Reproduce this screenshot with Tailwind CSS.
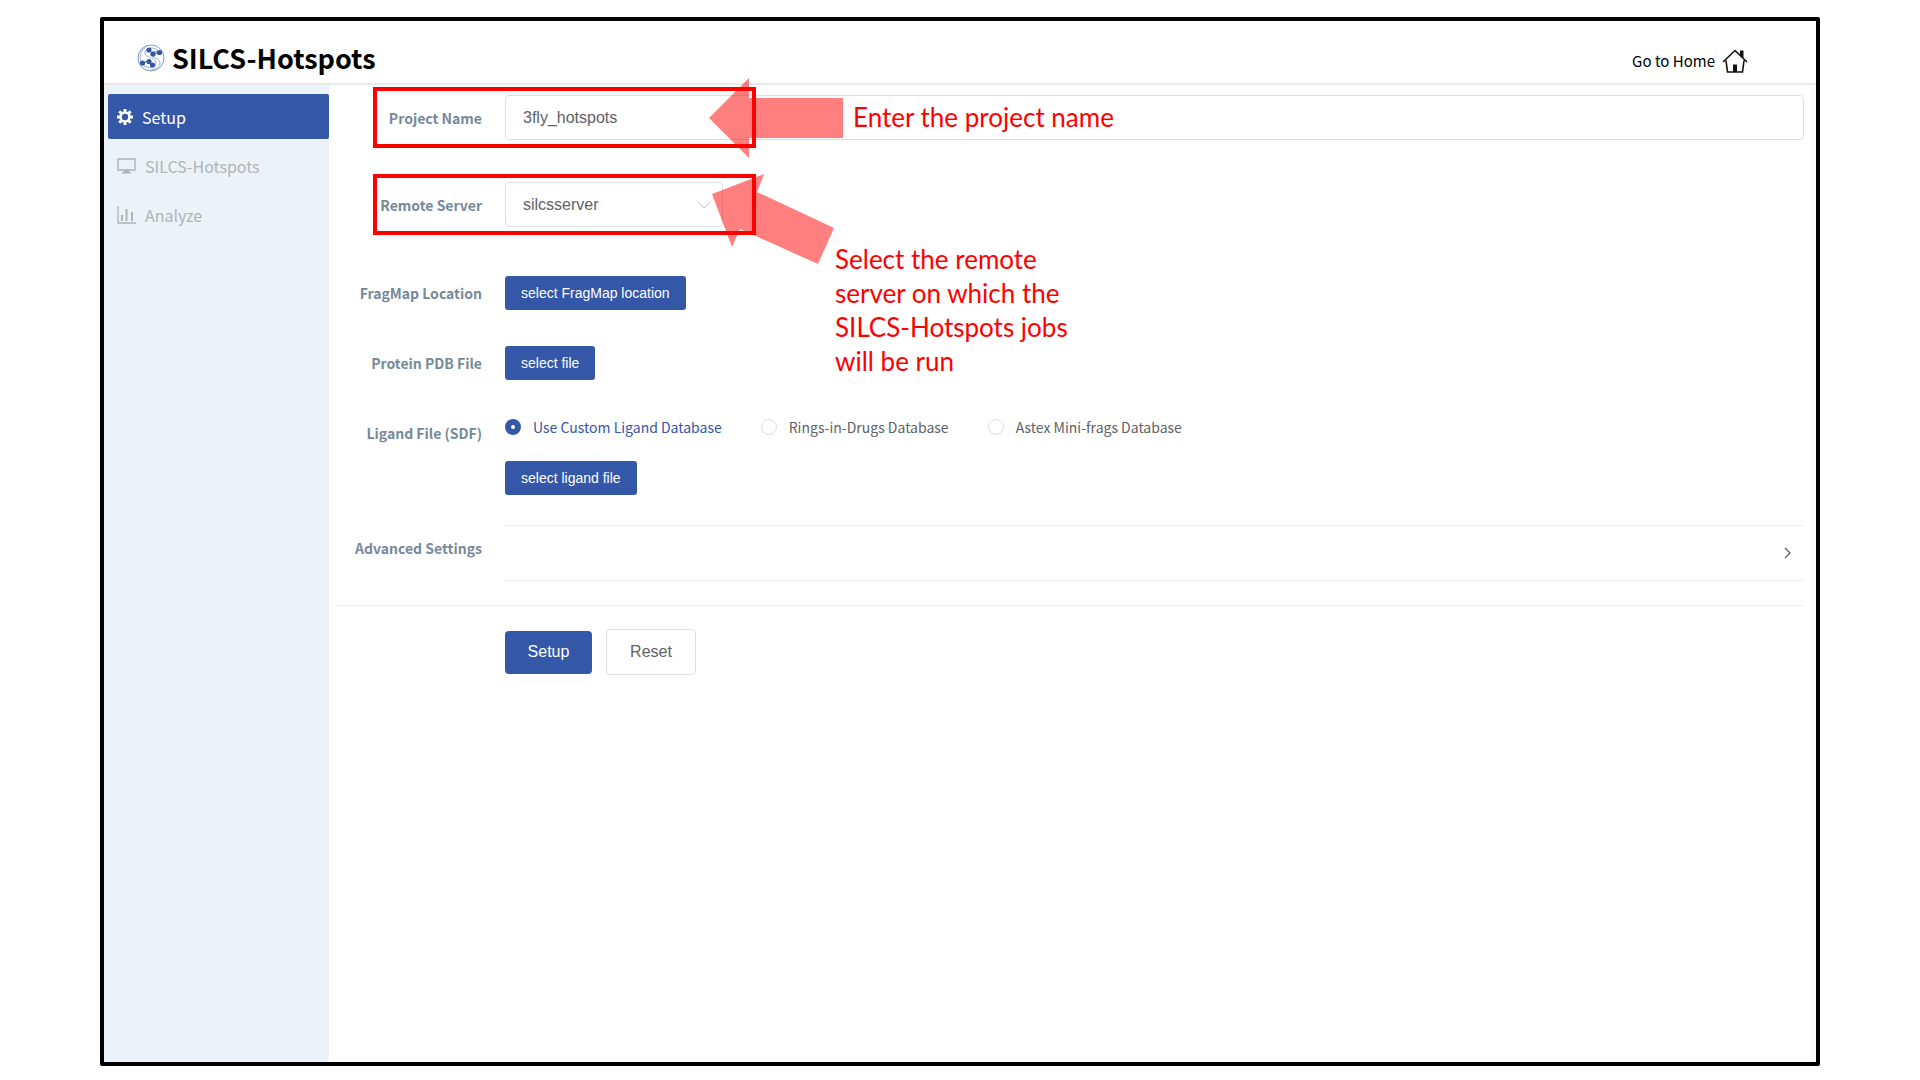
<!DOCTYPE html>
<html lang="en">
<head>
  <meta charset="UTF-8" />
  <meta name="viewport" content="width=device-width, initial-scale=1.0" />
  <title>SILCS-Hotspots</title>
  <script src="https://cdn.jsdelivr.net/npm/@tailwindcss/browser@4"></script>
</head>
<body class="min-h-screen flex flex-col bg-white px-[100px] pt-[17px] pb-[14px] font-['Noto_Sans_CJK_SC',sans-serif]">
  <div class="flex-1 flex flex-col border-4 border-black rounded-xs">

    <header class="flex justify-between items-center h-16 border-b-2 border-[#e9eaeb] pl-[33px] pr-[68px]">
      <h1 class="flex items-center gap-[7px] text-[27px] leading-8 font-bold text-black pt-3">
        <svg class="w-7 h-7" viewBox="0 0 28 28" fill="none">
          <circle cx="14" cy="14" r="13" stroke="#7f96cb" />
          <path d="M22 8C18 2 8 3 8 9c0 5 11 4 11 10 0 5-8 6-13 2" stroke="#9badd7" />
          <path d="M22 8C17 7 13 8 14 11c1 3 10 3 9 9-1 4-6 6-10 6M5 19c-4-6-1-13 5-17" stroke="#9badd7" />
          <path d="M12 6l4 4 7-2M5 19l7-2 4 4" stroke="#3456a5" />
          <g fill="#3456a5">
            <circle cx="12" cy="6" r="2.600" /><circle cx="16" cy="10" r="2.600" /><circle cx="22.500" cy="8.500" r="2.600" />
            <circle cx="5.500" cy="19" r="2.600" /><circle cx="12" cy="17.500" r="2.600" /><circle cx="15.500" cy="21" r="2.600" />
          </g>
        </svg>
        SILCS-Hotspots
      </h1>
      <a href="#" class="flex items-center gap-[7px] text-[15px] leading-6 text-black pt-[18px]">
        Go to Home
        <svg class="w-[26px] h-6" viewBox="0 0 26 24" fill="none" stroke="#111" stroke-width="1.600">
          <path d="M1 13L13 1.500 25 13M4 11.500L5.500 23h15L22 11.500" />
          <path d="M18 1.500h3.500v8L18 6zM11 15.500h4V23h-4z" fill="#111" stroke="none" />
        </svg>
      </a>
    </header>

    <div class="flex-1 flex">
      <nav class="w-[225px] shrink-0 flex flex-col gap-1 bg-[#ebf3f9] pl-1 pt-[9px] text-base">
        <a href="#" class="flex items-center gap-[9px] h-[45px] pl-[9px] rounded-xs bg-[#3457a7] text-white">
          <svg class="w-4 h-4" viewBox="0 0 16 16">
            <g fill="none" stroke="#fff">
              <circle cx="8" cy="8" r="4.500" stroke-width="2.600" />
              <path d="M8 0v3M8 13v3M0 8h3M13 8h3M2.300 2.300l2.200 2.200M11.500 11.500l2.200 2.200M2.300 13.700l2.200-2.200M11.500 4.500l2.200-2.200" stroke-width="3" />
            </g>
          </svg>
          Setup
        </a>
        <a href="#" class="flex items-center gap-[9px] h-[45px] pl-[9px] text-[#b0b3b5]">
          <svg class="w-[19px] h-4" viewBox="0 0 19 16" fill="none">
            <path d="M1 1h17v11H1z" stroke="#b0b3b5" stroke-width="1.400" />
            <path d="M7 12h5v2h2v1.500H5V14h2z" fill="#b0b3b5" />
          </svg>
          SILCS-Hotspots
        </a>
        <a href="#" class="flex items-center gap-[9px] h-[45px] pl-[9px] text-[#b0b3b5]">
          <svg class="w-[19px] h-[18px]" viewBox="0 0 19 18" fill="none" stroke="#b0b3b5">
            <path d="M1 0v17h18" stroke-width="1.300" />
            <path d="M5 9v6M9.500 3v12M15 6v9" stroke-width="2" />
          </svg>
          Analyze
        </a>
      </nav>

      <main class="flex-1 pl-[7px] pr-[6px] pt-[10px]">
        <form>

          <div class="relative flex items-center gap-[23px] h-[45px]">
            <label for="project" class="w-[146px] shrink-0 text-right text-sm font-bold text-[#76899b]">Project Name</label>
            <input id="project" type="text" value="3fly_hotspots" class="flex-1 h-[45px] rounded-sm border border-[#dcdfe6] px-[17px] font-['Liberation_Sans',sans-serif] text-base text-[#606266]" />
            <!-- callout: project name -->
            <svg class="absolute left-[373px] -top-[17px] w-[134px] h-20" viewBox="0 0 134 80">
              <path d="M0 40L40 0v20h94v40H40v20z" fill="#f00" fill-opacity=".5" />
            </svg>
            <div class="absolute left-[37px] -top-2 w-[383px] h-[61px] border-4 border-[#f00]"></div>
            <p class="absolute left-[517px] top-[5px] font-[Lato,sans-serif] text-[26px] leading-[34px] text-[#f00] whitespace-nowrap">Enter the project name</p>
          </div>

          <div class="relative flex items-center gap-[23px] h-[45px] mt-[42px]">
            <label for="server" class="w-[146px] shrink-0 text-right text-sm font-bold text-[#76899b]">Remote Server</label>
            <div class="relative w-[218px]">
              <select id="server" class="appearance-none w-full h-[45px] rounded-sm border border-[#dcdfe6] px-[17px] font-['Liberation_Sans',sans-serif] text-base text-[#606266]">
                <option>silcsserver</option>
              </select>
              <svg class="absolute right-[13px] top-[19px] w-3 h-2 pointer-events-none" viewBox="0 0 12 8" fill="none" stroke="#c0c4cc"><path d="M0 1l6 6 6-6" /></svg>
            </div>
            <!-- callout: remote server -->
            <svg class="absolute left-[376px] -top-2 w-[123px] h-[90px]" viewBox="0 0 123 90">
              <path d="M0 20L52 0l-7 18 77 36-16 36L28 55l-8 18z" fill="#f00" fill-opacity=".5" />
            </svg>
            <div class="absolute left-[37px] -top-2 w-[383px] h-[61px] border-4 border-[#f00]"></div>
            <p class="absolute left-[499px] top-[60px] font-[Lato,sans-serif] text-[26px] leading-[34px] text-[#f00] whitespace-nowrap">Select the remote<br>server on which the<br>SILCS-Hotspots jobs<br>will be run</p>
          </div>

          <div class="flex items-center gap-[23px] mt-[49px]">
            <label for="fragmap" class="w-[146px] shrink-0 text-right text-sm leading-6 font-bold text-[#76899b]">FragMap Location</label>
            <button id="fragmap" type="button" class="h-[34px] px-4 rounded-[3px] bg-[#3457a7] font-['Liberation_Sans',sans-serif] text-sm text-white">select FragMap location</button>
          </div>

          <div class="flex items-center gap-[23px] mt-9">
            <label for="protein" class="w-[146px] shrink-0 text-right text-sm leading-6 font-bold text-[#76899b]">Protein PDB File</label>
            <button id="protein" type="button" class="h-[34px] px-4 rounded-[3px] bg-[#3457a7] font-['Liberation_Sans',sans-serif] text-sm text-white">select file</button>
          </div>

          <div class="flex items-start gap-[23px] mt-9">
            <label for="ligand" class="w-[146px] shrink-0 text-right text-sm leading-[34px] font-bold text-[#76899b]">Ligand File (SDF)</label>
            <div>
              <div class="flex gap-[39px] text-sm leading-[22px] text-[#606266]">
                <label class="flex items-center gap-3 text-[#3457a7]">
                  <input type="radio" name="db" checked class="appearance-none w-4 h-4 rounded-full border border-[#dcdfe6] checked:border-[6px] checked:border-[#3457a7]" />
                  Use Custom Ligand Database
                </label>
                <label class="flex items-center gap-3">
                  <input type="radio" name="db" class="appearance-none w-4 h-4 rounded-full border border-[#dcdfe6] checked:border-[6px] checked:border-[#3457a7]" />
                  Rings-in-Drugs Database
                </label>
                <label class="flex items-center gap-3">
                  <input type="radio" name="db" class="appearance-none w-4 h-4 rounded-full border border-[#dcdfe6] checked:border-[6px] checked:border-[#3457a7]" />
                  Astex Mini-frags Database
                </label>
              </div>
              <button id="ligand" type="button" class="mt-[23px] h-[34px] px-4 rounded-[3px] bg-[#3457a7] font-['Liberation_Sans',sans-serif] text-sm text-white">select ligand file</button>
            </div>
          </div>

          <div class="flex items-start gap-[23px] mt-[30px]">
            <label for="advanced" class="w-[146px] shrink-0 text-right text-sm leading-[46px] font-bold text-[#76899b]">Advanced Settings</label>
            <button id="advanced" type="button" class="flex-1 flex justify-end items-center h-14 border-y border-[#ebeef5] pr-3">
              <svg class="w-2 h-3" viewBox="0 0 8 12" fill="none" stroke="#555" stroke-width="1.200"><path d="M1 1l5 5-5 5" /></svg>
            </button>
          </div>

          <hr class="mt-6 border-[#ebeef5]" />

          <div class="flex items-center gap-[14px] pl-[169px] mt-[23px]">
            <button type="submit" class="w-[87px] h-[43px] rounded-sm bg-[#3457a7] font-['Liberation_Sans',sans-serif] text-base text-white">Setup</button>
            <button type="reset" class="w-[90px] h-[46px] rounded-sm border border-[#dcdfe6] font-['Liberation_Sans',sans-serif] text-base text-[#606266]">Reset</button>
          </div>
        </form>
      </main>

      <!-- scrollbar gutter -->
      <div class="w-[6px] bg-[#fafafa]"></div>
    </div>
  </div>
</body>
</html>
